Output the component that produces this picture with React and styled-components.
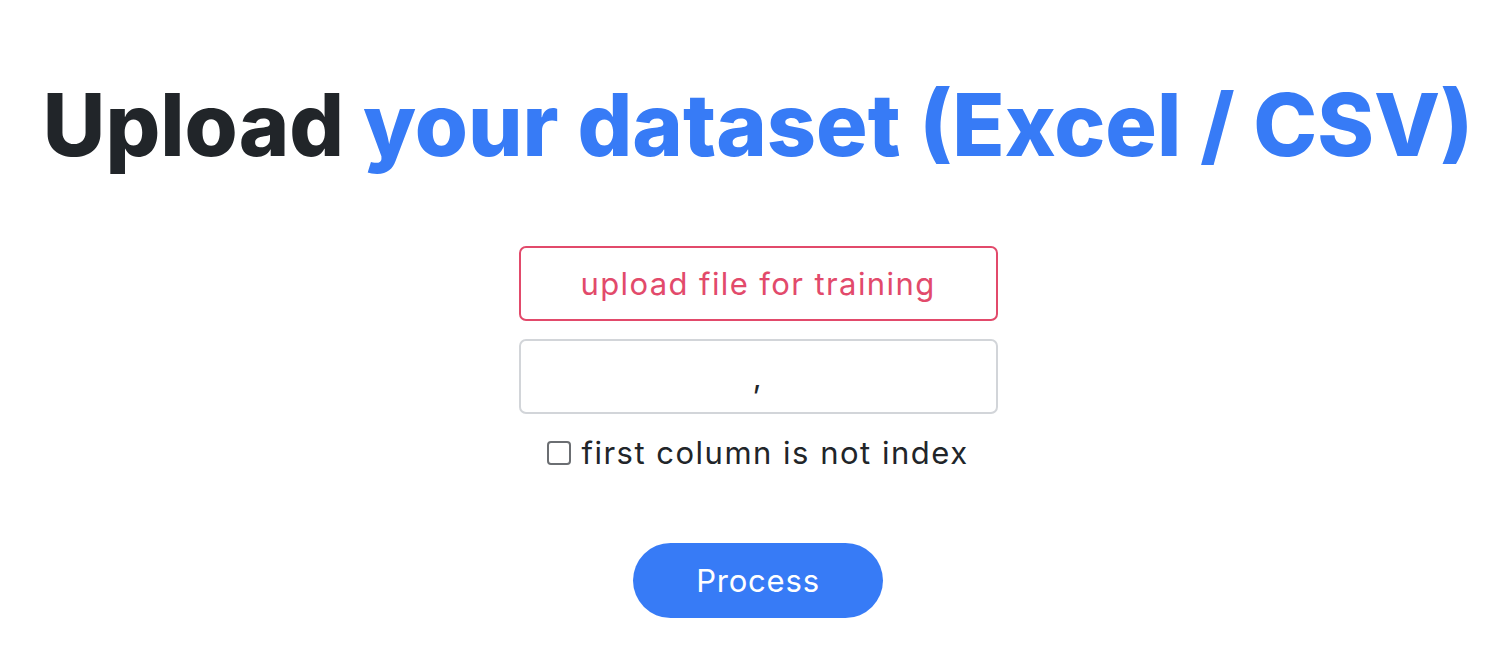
import React, { useState } from 'react';
import styled, { createGlobalStyle } from 'styled-components';

const GlobalStyle = createGlobalStyle`
  body {
    margin: 0;
    background: #ffffff;
    font-family: Inter, "Open Sans", sans-serif;
    color: #212529;
  }
`;

const StyledPage = styled.main`
  display: flex;
  flex-direction: column;
  align-items: center;
  padding: 74px 0 0 6px;
`;

const StyledTitle = styled.h1`
  margin: 0;
  font-family: Inter, sans-serif;
  font-weight: 800;
  font-size: 86px;
  line-height: 1.2;
  color: #212529;
  white-space: nowrap;
`;

const StyledAccent = styled.span`
  color: #377bf6;
`;

const StyledForm = styled.form`
  display: flex;
  flex-direction: column;
  align-items: center;
  margin-top: 69px;
  width: 479px;
`;

const StyledField = styled.label`
  box-sizing: border-box;
  width: 100%;
  height: 75px;
  display: flex;
  align-items: center;
  justify-content: center;
  border: 2px solid ${({ error }) => (error ? '#e24a6b' : '#d2d5d9')};
  border-radius: 7px;
  color: ${({ error }) => (error ? '#e24a6b' : '#212529')};
  font-size: 31px;
  letter-spacing: 1.4px;
  cursor: pointer;
  & + & {
    margin-top: 18px;
  }
`;

const StyledHidden = styled.input`
  display: none;
`;

const StyledCheckRow = styled.label`
  display: flex;
  align-items: center;
  gap: 10px;
  margin-top: 20px;
  font-size: 31px;
  letter-spacing: 1.5px;
  color: #212529;
`;

const StyledBox = styled.input`
  appearance: none;
  margin: 0;
  width: 24px;
  height: 24px;
  border: 2px solid #6b6e72;
  border-radius: 4px;
  background: #fff;
`;

const StyledButton = styled.button`
  margin-top: 72px;
  width: 250px;
  height: 75px;
  border: none;
  border-radius: 38px;
  background: #377bf6;
  color: #ffffff;
  font-family: Inter, sans-serif;
  font-size: 31px;
  letter-spacing: 0.8px;
  cursor: pointer;
`;

const App = () => {
  const [notIndex, setNotIndex] = useState(false);
  return (
    <>
      <GlobalStyle />
      <StyledPage>
        <StyledTitle>
          Upload <StyledAccent>your dataset (Excel / CSV)</StyledAccent>
        </StyledTitle>
        <StyledForm onSubmit={(e) => e.preventDefault()}>
          <StyledField error>
            upload file for training
            <StyledHidden type="file" accept=".csv,.xlsx,.xls" />
          </StyledField>
          <StyledField>,</StyledField>
        </StyledForm>
        <StyledCheckRow>
          <StyledBox type="checkbox" checked={notIndex} onChange={() => setNotIndex(!notIndex)} />
          first column is not index
        </StyledCheckRow>
        <StyledButton type="button">Process</StyledButton>
      </StyledPage>
    </>
  );
};

export default App;
